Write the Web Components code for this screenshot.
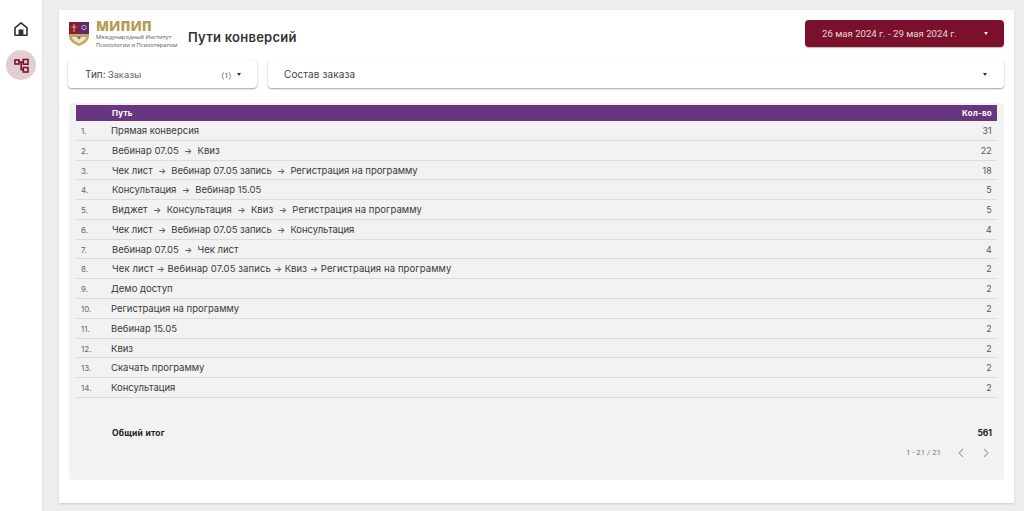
<!DOCTYPE html>
<html lang="ru"><head><meta charset="utf-8"><style>
html,body{margin:0;padding:0;height:100%}
body{width:1024px;height:511px;overflow:hidden;background:#eeeeee;font-family:"Inter","Liberation Sans",sans-serif}
app-shell{display:flex;height:511px}
</style></head><body>
<app-shell>
<side-nav></side-nav>
<main-card>
  <report-header title-text="Пути конверсий" date="26 мая 2024 г. - 29 мая 2024 г."></report-header>
  <filter-row></filter-row>
  <paths-table></paths-table>
</main-card>
</app-shell>
<script>
function def(name,html){customElements.define(name,class extends HTMLElement{connectedCallback(){if(this.shadowRoot)return;const r=this.attachShadow({mode:'open'});r.innerHTML=typeof html==='function'?html(this):html;}})}
def('app-shell','<style>:host{display:flex;height:511px}</style><slot></slot>');
def('side-nav',`<style>
:host{display:flex;flex-direction:column;align-items:center;width:42px;flex:none;background:#fff;padding-top:14px;box-sizing:border-box;box-shadow:1px 0 1px #e4e4e4}
.b{width:30px;height:30px;border-radius:50%;display:flex;align-items:center;justify-content:center}
.a{background:#e2cdd2;margin-top:6px}
svg{display:block}
</style>
<div class="b"><svg width="16" height="16" viewBox="0 0 16 16" fill="none"><path d="M2 6.800 8 1.800l6 5V14.200H2Z" stroke="#333" stroke-width="1.600" stroke-linejoin="round"/><rect x="5.600" y="8.400" width="4.800" height="5.600" fill="#333"/></svg></div>
<div class="b a"><svg width="15" height="15" viewBox="0 0 15 15" fill="none" stroke="#7a1230" stroke-width="1.600"><rect x="1" y="2" width="4" height="4"/><rect x="9.300" y="1.500" width="4.700" height="4.700"/><rect x="9.300" y="9.500" width="4.700" height="4.500"/><path d="M5 4h4.300M7.200 4V11.700H9.300"/></svg></div>`);
def('main-card',`<style>
:host{display:flex;flex-direction:column;width:955px;height:493px;margin:10px 0 0 17px;background:#fff;box-shadow:0 1px 2px #c9c9c9;box-sizing:border-box;padding:10px 10px 23px 9px}
</style><slot></slot>`);
def('report-header',h=>`<style>
:host{display:flex;align-items:flex-start;height:27px;justify-content:space-between;flex:none}
.l{display:flex;align-items:flex-start}
.shield{margin:1px 0 0 1px;display:block}
.txt{margin-left:7px;width:83px;display:flex;flex-direction:column}
.m{font:800 13.500px/13px "Open Sans","Liberation Sans",sans-serif;color:#b59c52;height:13px;margin-top:-.5px}
.s{font:400 5.800px/8px "Open Sans",sans-serif;color:#555;white-space:nowrap}
h1{margin:7px 0 0 9px;font:600 13px/20px "Inter",sans-serif;color:#333;letter-spacing:.25px;white-space:nowrap}
.d{width:199px;height:27px;background:#7a102c;border-radius:4px;color:#e8d5da;font:400 9.600px/27px "Roboto",sans-serif;display:flex;box-sizing:border-box;padding:0 17px;justify-content:space-between;box-shadow:0 1px 1px #bbb;align-items:center}
.c{width:0;height:0;border:2.500px solid transparent;border-top:3px solid #eee;border-bottom:0}
</style>
<div class="l"><svg class="shield" width="20" height="25" viewBox="0 0 20 25"><path d="M0 1h20v14c0 5-5 8-10 10C5 23 0 20 0 15Z" fill="#c2a85e"/><rect x="0" y="1" width="10" height="12" fill="#8a1a38"/><rect x="10" y="1" width="10" height="12" fill="#5c2a6e"/><path d="M3 16h14c0 3-4 5-7 6.500C7 21 3 19 3 16Z" fill="#eee3c0"/><path d="M7.500 15.500h5l-2.500 3Z" fill="#7d5a90"/><path d="M5 3v8M2.500 6h5" stroke="#d8b86a" stroke-width="1"/><circle cx="15" cy="6.500" r="2.200" fill="none" stroke="#c9a9c9" stroke-width="1"/></svg>
<div class="txt"><span class="m">МИПИП</span><span class="s">Международный Институт</span><span class="s">Психологии и Психотерапии</span></div>
<h1>${h.getAttribute('title-text')}</h1></div>
<div class="d"><span>${h.getAttribute('date')}</span><span class="c" style="margin-right:-1px"></span></div>`);
def('filter-row',`<style>
:host{display:flex;gap:11px;margin-top:13px;height:28px;flex:none;font-family:"Roboto",sans-serif;font-size:10px;color:#555}
.f{background:#fff;border-radius:4px;box-shadow:0 1px 2px #9f9f9f;display:flex;align-items:center;justify-content:space-between;box-sizing:border-box}
.a{width:189px;padding:0 16px 0 17px}
.b{flex:1;padding:0 17px 0 16px}
.t{font:400 10px "Inter",sans-serif;color:#444}
.n{font-size:7.500px;color:#555;margin-right:6px}
.c{display:inline-block;width:0;height:0;border:2.500px solid transparent;border-top:3px solid #333;border-bottom:0;vertical-align:middle}
.k{font-family:"Roboto",sans-serif;font-size:9.500px;color:#666}
</style>
<div class="f a"><span><span class="t">Тип:</span> <span class="k">Заказы</span></span><span><span class="n">(1)</span><span class="c"></span></span></div>
<div class="f b"><span class="t" style="letter-spacing:.1px">Состав заказа</span><span class="c"></span></div>`);
const rows=[['Прямая конверсия',31],['Вебинар 07.05  →  Квиз',22],['Чек лист  →  Вебинар 07.05 запись  →  Регистрация на программу',18],['Консультация  →  Вебинар 15.05',5],['Виджет  →  Консультация  →  Квиз  →  Регистрация на программу',5],['Чек лист  →  Вебинар 07.05 запись  →  Консультация',4],['Вебинар 07.05  →  Чек лист',4],['Чек лист → Вебинар 07.05 запись → Квиз → Регистрация на программу',2],['Демо доступ',2],['Регистрация на программу',2],['Вебинар 15.05',2],['Квиз',2],['Скачать программу',2],['Консультация',2]];
const fmt=s=>s.replace(/→/g,'<u>→</u>');
const rowStyle=i=>i===7?'margin-left:1px;letter-spacing:.1px':i===4?'margin-left:1px;letter-spacing:.06px':(i===2||i===5)?'margin-left:1px;letter-spacing:-.04px':(i>=1&&i<=6)?'margin-left:1px':'';
def('paths-table',`<style>
:host{display:block;margin:15px 0 0 1px;height:377px;background:#f2f2f2;border-radius:4px;padding:2px 7px 0 7px;box-sizing:border-box;position:relative;font-family:"Inter",sans-serif;flex:none}
.h,.r,.tot{display:grid;grid-template-columns:30px 1fr auto;padding:0 5px}
.h{height:16px;background:#683580;color:#fff;font:700 8px/16px "Inter",sans-serif}
.h span:nth-child(2){padding-left:1px;letter-spacing:.2px}
.h span:last-child{letter-spacing:.25px}
.r{height:19.790px;box-sizing:border-box;border-bottom:1px solid #dcdcdc;font-size:9.500px;line-height:20px;color:#3a3a3a;white-space:pre}
.r u{text-decoration:none;font-size:8.500px}
.r i{font-style:normal;font-size:8px;color:#666}
.r b{font-weight:400;font-size:8.800px;color:#555;letter-spacing:.3px}
.tot{margin-top:30px;font:700 8.500px/10px "Inter",sans-serif;color:#222}
.tot span:nth-child(2){padding-left:1px;letter-spacing:.25px}
.p{display:flex;justify-content:flex-end;align-items:center;margin-top:5px;height:20px;font:400 7.800px "Roboto",sans-serif;color:#777;padding-right:5px}
svg{display:block;margin-left:13px}
</style>
<div class="h"><span></span><span>Путь</span><span>Кол-во</span></div>
${rows.map((r,i)=>`<div class="r"><i>${i+1}.</i><span style="${rowStyle(i)}">${fmt(r[0])}</span><b>${r[1]}</b></div>`).join('')}
<div class="tot"><span></span><span>Общий итог</span><span>561</span></div>
<div class="p"><span>1 - 21 / 21</span><svg width="12" height="12" viewBox="0 0 12 12" fill="none" stroke="#aaa" stroke-width="1.200" style="margin-left:14px"><path d="M8 2 4 6l4 4"/></svg><svg width="12" height="12" viewBox="0 0 12 12" fill="none" stroke="#aaa" stroke-width="1.200"><path d="M4 2l4 4-4 4"/></svg></div>`);
</script>
</body></html>
